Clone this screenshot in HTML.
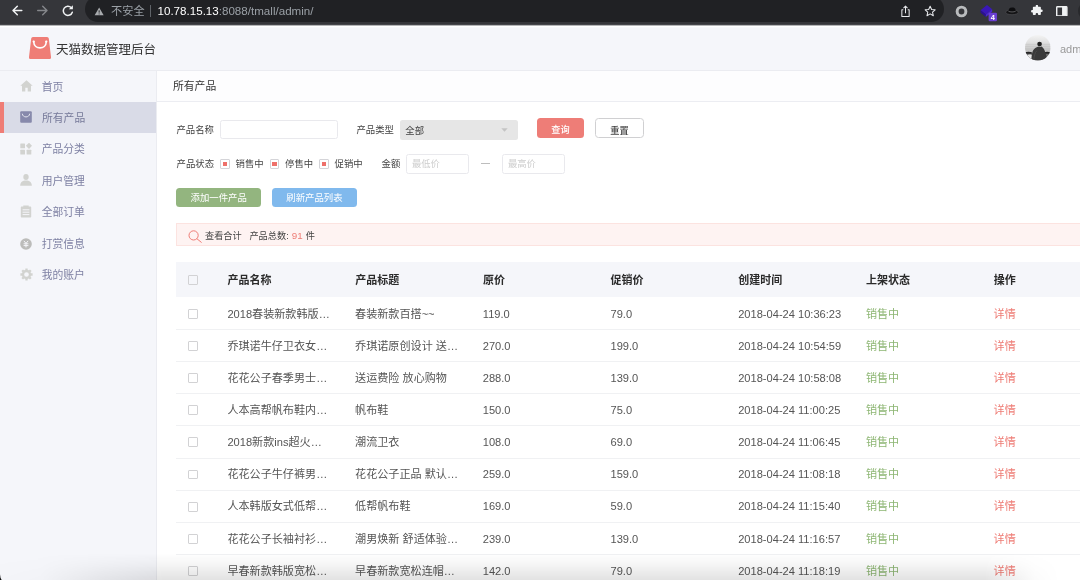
<!DOCTYPE html>
<html lang="zh-CN">
<head>
<meta charset="utf-8">
<title>天猫数据管理后台</title>
<style>
*{box-sizing:border-box;margin:0;padding:0}
html,body{width:1080px;height:580px;overflow:hidden;background:#fff}
body{font-family:"Liberation Sans","Noto Sans CJK SC",sans-serif;color:#333;position:relative;-webkit-font-smoothing:antialiased}
#wrap{position:absolute;left:0;top:0;width:1080px;height:580px;overflow:hidden;will-change:transform}
.abs{position:absolute}
/* browser chrome */
#chrome{position:absolute;left:0;top:0;width:1080px;height:25px;background:#35363a;border-bottom:1px solid #45464a}
#cline{position:absolute;left:0;top:25px;width:1080px;height:3px;background:linear-gradient(to bottom,#b4b5b7 0,#b4b5b7 1px,#fff 1px,#fff 2px,#f8f9fc 2px,#f8f9fc 3px);z-index:3}
#pill{position:absolute;left:85px;top:-4px;width:859px;height:26px;border-radius:13px;background:#202124}
#chrome svg{position:absolute}
.url{position:absolute;top:4px;font-size:11.6px;line-height:14px;white-space:nowrap;letter-spacing:0}
/* header */
#header{position:absolute;left:0;top:25px;width:1080px;height:45.5px;background:#f5f6fa;border-bottom:1px solid #ebecf1}
#title{position:absolute;left:56px;top:16px;font-size:12.5px;line-height:18px;color:#333;white-space:nowrap}
/* sidebar */
#side{position:absolute;left:0;top:70.5px;width:157px;height:510px;background:#f5f6fa;border-right:1px solid #ebecf1}
.mi{position:absolute;left:0;width:156px;height:31.400px}
.mi span{position:absolute;left:41.700px;top:8px;font-size:10.800px;line-height:16px;color:#7e81a3;white-space:nowrap}
.mi svg{position:absolute;left:19.500px;top:9px}
.mi.on{background:#d9dbe7;border-left:4px solid #ef7d76}
.mi.on span{left:38px;color:#767999}
.mi.on svg{left:15.800px}
/* main */
#crumb{position:absolute;left:157px;top:70.5px;width:923px;height:31px;background:#fdfdfe;border-bottom:1px solid #ecedf2}
#crumb span{position:absolute;left:16px;top:7.5px;font-size:10.8px;line-height:16px;color:#333}
.lbl{position:absolute;font-size:9.4px;line-height:12px;color:#444;white-space:nowrap}
.inp{position:absolute;border:1px solid #e9e9ed;border-radius:2.5px;background:#fff;height:19.5px}
.ph{position:absolute;left:5px;top:3px;font-size:9.3px;line-height:12px;color:#cdcdcd;white-space:nowrap}
.cb{position:absolute;width:9.600px;height:9.600px;border:1px solid #d4d4d8;border-radius:1px;background:#fff}
.cb i{position:absolute;left:1.500px;top:1.500px;width:4.800px;height:4.800px;background:#ee706a}
.btn{position:absolute;height:19.6px;border-radius:3.5px;color:#fff;font-size:9.4px;line-height:19.6px;text-align:center;white-space:nowrap}
/* table */
#thead{position:absolute;left:176.400px;top:262px;width:910px;height:35px;background:#f5f6fa}
.th{position:absolute;top:273px;font-size:11px;line-height:14px;font-weight:bold;color:#2b2b2b;white-space:nowrap}
.row{position:absolute;left:176.400px;width:910px;height:32.150px;border-bottom:1px solid #f0f1f3}
.row span{position:absolute;top:8.800px;font-size:11.100px;line-height:14px;color:#555;white-space:nowrap}
.row .ck{position:absolute;left:11.600px;top:11.100px;width:10px;height:9.800px;border:1px solid #d2d2d4;border-radius:1px;background:#fff}
.c1{left:51px}.c2{left:178.7px}.c3{left:306.4px}.c4{left:434.1px}.c5{left:561.8px}
.row span.c6{left:689.5px;color:#8db673}
.row span.c7{left:817.2px;color:#ee7c75}
#fade{position:absolute;left:0;top:553px;width:1080px;height:27px;background:linear-gradient(to bottom,rgba(0,0,0,0),rgba(0,0,0,0.035) 40%,rgba(0,0,0,0.115));-webkit-mask-image:linear-gradient(to right,rgba(0,0,0,.05) 0,rgba(0,0,0,.1) 40px,rgba(0,0,0,.6) 100px,#000 165px,#000 985px,rgba(0,0,0,.15) 1035px,rgba(0,0,0,0) 1060px);mask-image:linear-gradient(to right,rgba(0,0,0,.05) 0,rgba(0,0,0,.1) 40px,rgba(0,0,0,.6) 100px,#000 165px,#000 985px,rgba(0,0,0,.15) 1035px,rgba(0,0,0,0) 1060px)}
#corner{position:absolute;left:0;top:574px;width:3px;height:6px}
</style>
</head>
<body>
<div id="wrap">

<!-- ============ browser chrome ============ -->
<div id="chrome">
  <div id="pill"></div>
  <!-- back -->
  <svg style="left:11px;top:4.300px" width="13" height="13" viewBox="0 0 13 13"><path d="M10.800 6.500H2.400M6.300 2.200L2 6.500l4.300 4.300" fill="none" stroke="#f1f3f4" stroke-width="1.5" stroke-linecap="round" stroke-linejoin="round"/></svg>
  <!-- forward -->
  <svg style="left:36px;top:4.300px" width="13" height="13" viewBox="0 0 13 13"><path d="M1.700 6.500h8.800M6.700 2.200l4.300 4.300-4.300 4.300" fill="none" stroke="#85878b" stroke-width="1.4" stroke-linecap="round" stroke-linejoin="round"/></svg>
  <!-- reload -->
  <svg style="left:61px;top:4px" width="14" height="14" viewBox="0 0 14 14"><path d="M11.3 8.2A4.6 4.6 0 1 1 10.2 3.6" fill="none" stroke="#f1f3f4" stroke-width="1.5" stroke-linecap="round"/><path d="M11.9 1.2v4.1H7.8z" fill="#f1f3f4"/></svg>
  <!-- warning -->
  <svg style="left:93.900px;top:7px" width="10.300" height="8.800" viewBox="0 0 11 10"><path d="M5.5 0.6L10.6 9.4H0.4z" fill="#a8abae"/><path d="M5.5 3.8v2.6M5.5 7.4v1" stroke="#202124" stroke-width="1.1"/></svg>
  <span class="url" style="left:111px;color:#9aa0a6;font-size:11.2px">不安全</span>
  <div class="abs" style="left:150px;top:5px;width:1px;height:12px;background:#5f6368"></div>
  <span class="url" style="left:157.5px;color:#fff">10.78.15.13<span style="color:#9aa0a6">:8088/tmall/admin/</span></span>
  <!-- share -->
  <svg style="left:899.600px;top:4.700px" width="11" height="12.800" viewBox="0 0 12 14"><path d="M3.6 5.2H2v7.3h8V5.2H8.4M6 9V1.4M3.8 3.4L6 1.2l2.2 2.2" fill="none" stroke="#e8eaed" stroke-width="1.1" stroke-linejoin="round"/></svg>
  <!-- star -->
  <svg style="left:924.300px;top:4.800px" width="12.300" height="12.300" viewBox="0 0 14 14"><path d="M7 1.4l1.7 3.7 4 .4-3 2.7.9 4L7 10.1 3.4 12.2l.9-4-3-2.7 4-.4z" fill="none" stroke="#e8eaed" stroke-width="1.15" stroke-linejoin="round"/></svg>
  <!-- grey ring -->
  <svg style="left:955px;top:4.500px" width="13" height="13" viewBox="0 0 14 14"><circle cx="7" cy="7" r="4.7" fill="none" stroke="#b9bbbd" stroke-width="3.2"/></svg>
  <!-- purple cube + badge -->
  <svg style="left:979px;top:3px" width="20" height="20" viewBox="0 0 20 20"><path d="M1.5 7.2L8 2l5.2 4.3L6.8 11.6z" fill="#3a17b8"/><path d="M1.5 7.2v2.4l5.3 4.3v-2.3z" fill="#2a0f93"/><path d="M6.8 11.6v2.3l6.4-5.2V6.3z" fill="#4a26cf"/><rect x="9.6" y="9.8" width="8.4" height="8.4" rx="1.2" fill="#6a3fd1"/><text x="13.8" y="16.8" font-family="Liberation Sans,sans-serif" font-size="7.5" font-weight="bold" fill="#fff" text-anchor="middle">4</text></svg>
  <!-- hat -->
  <svg style="left:1005px;top:6px" width="14" height="10" viewBox="0 0 14 10"><ellipse cx="7" cy="6.200" rx="6.300" ry="2.500" fill="#141416" stroke="#5c5d61" stroke-width=".5"/><path d="M3.4 5.6C3.3 3 4.2 1.4 7.2 1.4s3.7 1.6 3.5 4.2c-1.6 1-5.6 1-7.3 0z" fill="#0d0d0f"/><path d="M3.4 5.2c1.8 1 5.5 1 7.3 0" stroke="#7a7a7d" stroke-width=".7" fill="none"/></svg>
  <!-- puzzle -->
  <svg style="left:1031.300px;top:4.900px" width="11.800" height="11.800" viewBox="0 0 14 14"><path d="M5.6 1.1a1.4 1.4 0 0 1 2.8 0V2h2.4c.5 0 .9.4.9.9v2.4h.7a1.5 1.5 0 0 1 0 3h-.7v2.7c0 .5-.4.9-.9.9H8.500v-.8a1.500 1.500 0 0 0-3 0v.8H3.100a.9.9 0 0 1-.9-.9V8.900h-.7a1.500 1.500 0 0 1 0-3h.7V2.900c0-.5.400-.9.900-.9h2.500z" fill="#f1f3f4"/></svg>
  <!-- side panel -->
  <svg style="left:1056.200px;top:5.700px" width="11.600" height="10.700" viewBox="0 0 13 12"><rect x=".8" y=".8" width="11.400" height="10.400" rx=".8" fill="none" stroke="#f1f3f4" stroke-width="1.600"/><rect x="6.800" y="1" width="5.200" height="10" fill="#f1f3f4"/></svg>
  <div class="abs" style="left:1078px;top:2px;width:18px;height:18px;border-radius:9px;background:#28292c"></div>
</div>

<div id="cline"></div>
<!-- ============ header ============ -->
<div id="header">
  <svg class="abs" style="left:29px;top:11.800px" width="22" height="22.300" viewBox="0 0 22 22.700" preserveAspectRatio="none"><path d="M4 0H18a1.800 1.800 0 0 1 1.800 1.600L22 20.300a2.200 2.200 0 0 1-2.200 2.400H2.200a2.200 2.200 0 0 1-2.200-2.400L2.200 1.600A1.800 1.800 0 0 1 4 0z" fill="#ef7d76"/><path d="M4.700 4.700c.3 8.500 12.300 8.500 12.600 0" fill="none" stroke="#fff" stroke-width="1.600" stroke-linecap="round"/><circle cx="4.700" cy="4.600" r="1.150" fill="#fff"/><circle cx="17.300" cy="4.600" r="1.150" fill="#fff"/></svg>
  <div id="title">天猫数据管理后台</div>
  <!-- avatar -->
  <svg class="abs" style="left:1025.200px;top:10.100px" width="25.600" height="25.600" viewBox="0 0 26 26"><defs><clipPath id="av"><circle cx="13" cy="13" r="13"/></clipPath><linearGradient id="sky" x1="0" y1="0" x2="0" y2="1"><stop offset="0" stop-color="#f4f4f4"/><stop offset=".35" stop-color="#dcdcdc"/><stop offset=".6" stop-color="#c4c4c4"/><stop offset="1" stop-color="#b0b0b0"/></linearGradient></defs><g clip-path="url(#av)"><rect width="26" height="26" fill="url(#sky)"/><path d="M0 9.500h26M0 11.500h26M0 14h26" stroke="#bdbdbd" stroke-width=".5"/><path d="M0 17.500c2-.8 5-.8 7 0v2H0zM19 17.500c2-.8 5-.8 7 0v2h-7z" fill="#262626"/><path d="M0 19h26v7H0z" fill="#6b6b6b"/><path d="M2 20.500c1.500-1 4.500-1 6 .5v3H2z" fill="#e8e8e8"/><circle cx="14.800" cy="9.200" r="2.350" fill="#1f1f1f"/><path d="M6.500 26c0-3 .3-6 1-8.500.6-2.400 2.600-4.600 5-5.200l1.500-.6c1 .3 2 .3 2.800 0 2.300 1.300 3.200 4 4.200 7l2 7.300z" fill="#3a3a3a"/><path d="M9 26c0-4 1-8 3-10" stroke="#555" stroke-width=".6" fill="none"/></g></svg>
  <span class="abs" style="left:1060px;top:16.500px;font-size:11px;line-height:14px;color:#9a9a9a">admin</span>
</div>

<!-- ============ sidebar ============ -->
<div id="side">
  <div class="mi" style="top:0">
    <svg width="13" height="12" viewBox="0 0 13 12"><path d="M6.500 0.300L0.300 5.800h1.700v5.700h3.300V7.800h2.400v3.700H11V5.800h1.700z" fill="#d2d3d0"/></svg>
    <span>首页</span>
  </div>
  <div class="mi on" style="top:31.400px">
    <svg width="12" height="12" viewBox="0 0 12 12" style="top:9.500px"><rect x=".2" y=".2" width="11.600" height="11.600" rx="1" fill="#8789ab"/><path d="M2.300 2.700c.3 4.300 7.100 4.300 7.400 0" fill="none" stroke="#e4e5ef" stroke-width="1"/></svg>
    <span>所有产品</span>
  </div>
  <div class="mi" style="top:62.800px">
    <svg width="12" height="12" viewBox="0 0 12 12" style="top:9.500px"><rect x=".3" y=".6" width="4.700" height="4.700" rx=".5" fill="#d2d3d0"/><rect x=".3" y="6.800" width="4.700" height="4.700" rx=".5" fill="#d2d3d0"/><rect x="6.600" y="6.800" width="4.700" height="4.700" rx=".5" fill="#d2d3d0"/><path d="M9 -.3L12 2.800 9 5.900 5.900 2.800z" fill="#d2d3d0"/></svg>
    <span>产品分类</span>
  </div>
  <div class="mi" style="top:94.200px">
    <svg width="12" height="12" viewBox="0 0 12 12" style="top:9.500px"><ellipse cx="6" cy="3.100" rx="2.700" ry="3" fill="#d2d3d0"/><path d="M.2 11.800c0-3.600 2.200-5.300 5.800-5.300s5.800 1.700 5.800 5.300z" fill="#d2d3d0"/></svg>
    <span>用户管理</span>
  </div>
  <div class="mi" style="top:125.600px">
    <svg width="12" height="13" viewBox="0 0 12 13" style="left:20px;top:9px"><path d="M1.500 1.600h1.800V.6h5.400v1h1.800c.4 0 .7.300.7.700v9.500c0 .4-.3.700-.7.700h-9c-.4 0-.7-.3-.7-.7V2.300c0-.4.300-.7.700-.7z" fill="#d2d3d0"/><path d="M2.600 4.800h6.800M2.600 7.200h6.800M2.600 9.600h6.800" stroke="#f5f6fa" stroke-width="1"/></svg>
    <span>全部订单</span>
  </div>
  <div class="mi" style="top:157px">
    <svg width="12" height="12" viewBox="0 0 12 12" style="left:20px;top:10px"><circle cx="6" cy="6" r="5.800" fill="#bcbcba"/><path d="M3.900 2.900L6 5.400l2.100-2.500M3.600 5.800h4.800M3.600 7.600h4.800M6 5.400v4" fill="none" stroke="#f5f6fa" stroke-width="1"/></svg>
    <span>打赏信息</span>
  </div>
  <div class="mi" style="top:188.400px">
    <svg width="13" height="13" viewBox="0 0 13 13" style="left:19.600px;top:8.800px"><g fill="none" stroke="#d2d3d0"><circle cx="6.500" cy="6.500" r="3.500" stroke-width="2.300"/><path d="M6.500 .4v2M6.500 10.600v2M.4 6.500h2M10.600 6.500h2M2.200 2.200l1.400 1.400M9.400 9.400l1.400 1.400M2.200 10.800l1.400-1.400M9.400 3.600l1.400-1.400" stroke-width="2.300"/></g></svg>
    <span>我的账户</span>
  </div>
</div>

<!-- ============ main ============ -->
<div id="crumb"><span>所有产品</span></div>

<!-- filter row 1 -->
<span class="lbl" style="left:176.400px;top:123.500px">产品名称</span>
<div class="inp" style="left:220px;top:119.500px;width:118px"></div>
<span class="lbl" style="left:356.400px;top:123.500px">产品类型</span>
<div class="abs" style="left:400.300px;top:120px;width:117.700px;height:19.500px;border-radius:2.500px;background:#e6e6e6">
  <span class="abs" style="left:5px;top:4.500px;font-size:9.400px;line-height:12px;color:#444">全部</span>
  <svg class="abs" style="left:100.500px;top:7.800px" width="7" height="4" viewBox="0 0 7 4"><path d="M.3 .2h6.400L3.500 3.800z" fill="#c4c4c4"/></svg>
</div>
<div class="btn" style="left:537px;top:118.300px;width:47px;height:19.800px;background:#ee7d77;font-weight:500;font-size:9.200px;line-height:25.600px;overflow:hidden">查询</div>
<div class="btn" style="left:595.300px;top:118.300px;width:48.500px;height:19.800px;background:#fff;border:1px solid #d0d0d2;color:#444;font-weight:500;font-size:9.200px;line-height:24.200px;overflow:hidden">重置</div>

<!-- filter row 2 -->
<span class="lbl" style="left:176.500px;top:157.500px">产品状态</span>
<div class="cb" style="left:220px;top:159px"><i></i></div>
<span class="lbl" style="left:235.500px;top:157.500px">销售中</span>
<div class="cb" style="left:269.700px;top:159px"><i></i></div>
<span class="lbl" style="left:285px;top:157.500px">停售中</span>
<div class="cb" style="left:319.200px;top:159px"><i></i></div>
<span class="lbl" style="left:334.600px;top:157.500px">促销中</span>
<span class="lbl" style="left:381.600px;top:157.500px">金额</span>
<div class="inp" style="left:406px;top:154px;width:63px"><span class="ph">最低价</span></div>
<div class="abs" style="left:481px;top:163.200px;width:9px;height:1px;background:#bdbdbd"></div>
<div class="inp" style="left:502px;top:154px;width:63px"><span class="ph">最高价</span></div>

<!-- buttons -->
<div class="btn" style="left:176.300px;top:187.500px;width:84.700px;background:#93b57f">添加一件产品</div>
<div class="btn" style="left:272px;top:187.500px;width:85px;background:#80b9ed">刷新产品列表</div>

<!-- summary bar -->
<div class="abs" style="left:176.400px;top:223px;width:910px;height:23px;background:#fef3f2;border:1px solid #fce3e0"></div>
<svg class="abs" style="left:187.500px;top:229.500px" width="15" height="13" viewBox="0 0 15 13"><circle cx="5.600" cy="5.400" r="4.600" fill="none" stroke="#ef7d76" stroke-width="1"/><path d="M9 8.800l4.300 3.500" stroke="#ef7d76" stroke-width="1" stroke-linecap="round"/></svg>
<span class="lbl" style="left:205px;top:229.500px;font-size:9.200px">查看合计</span>
<span class="lbl" style="left:249.400px;top:229.500px;font-size:9.200px">产品总数: <span style="color:#ee7c75;font-size:9.800px;margin:0 .5px 0 .6px">91</span> 件</span>

<!-- table header -->
<div id="thead"></div>
<div class="abs" style="left:188px;top:275px;width:10px;height:10px;border:1px solid #d2d2d4;border-radius:1px;background:#f5f6fa"></div>
<span class="th" style="left:227.500px">产品名称</span>
<span class="th" style="left:355.200px">产品标题</span>
<span class="th" style="left:482.900px">原价</span>
<span class="th" style="left:610.600px">促销价</span>
<span class="th" style="left:738.300px">创建时间</span>
<span class="th" style="left:866px">上架状态</span>
<span class="th" style="left:993.700px">操作</span>

<!-- table rows -->
<div class="row" style="top:297.80px"><div class="ck"></div><span class="c1">2018春装新款韩版…</span><span class="c2">春装新款百搭~~</span><span class="c3">119.0</span><span class="c4">79.0</span><span class="c5">2018-04-24 10:36:23</span><span class="c6">销售中</span><span class="c7">详情</span></div>
<div class="row" style="top:329.95px"><div class="ck"></div><span class="c1">乔琪诺牛仔卫衣女…</span><span class="c2">乔琪诺原创设计 送…</span><span class="c3">270.0</span><span class="c4">199.0</span><span class="c5">2018-04-24 10:54:59</span><span class="c6">销售中</span><span class="c7">详情</span></div>
<div class="row" style="top:362.10px"><div class="ck"></div><span class="c1">花花公子春季男士…</span><span class="c2">送运费险 放心购物</span><span class="c3">288.0</span><span class="c4">139.0</span><span class="c5">2018-04-24 10:58:08</span><span class="c6">销售中</span><span class="c7">详情</span></div>
<div class="row" style="top:394.25px"><div class="ck"></div><span class="c1">人本高帮帆布鞋内…</span><span class="c2">帆布鞋</span><span class="c3">150.0</span><span class="c4">75.0</span><span class="c5">2018-04-24 11:00:25</span><span class="c6">销售中</span><span class="c7">详情</span></div>
<div class="row" style="top:426.40px"><div class="ck"></div><span class="c1">2018新款ins超火…</span><span class="c2">潮流卫衣</span><span class="c3">108.0</span><span class="c4">69.0</span><span class="c5">2018-04-24 11:06:45</span><span class="c6">销售中</span><span class="c7">详情</span></div>
<div class="row" style="top:458.55px"><div class="ck"></div><span class="c1">花花公子牛仔裤男…</span><span class="c2">花花公子正品 默认…</span><span class="c3">259.0</span><span class="c4">159.0</span><span class="c5">2018-04-24 11:08:18</span><span class="c6">销售中</span><span class="c7">详情</span></div>
<div class="row" style="top:490.70px"><div class="ck"></div><span class="c1">人本韩版女式低帮…</span><span class="c2">低帮帆布鞋</span><span class="c3">169.0</span><span class="c4">59.0</span><span class="c5">2018-04-24 11:15:40</span><span class="c6">销售中</span><span class="c7">详情</span></div>
<div class="row" style="top:522.85px"><div class="ck"></div><span class="c1">花花公子长袖衬衫…</span><span class="c2">潮男焕新 舒适体验…</span><span class="c3">239.0</span><span class="c4">139.0</span><span class="c5">2018-04-24 11:16:57</span><span class="c6">销售中</span><span class="c7">详情</span></div>
<div class="row" style="top:555.00px"><div class="ck"></div><span class="c1">早春新款韩版宽松…</span><span class="c2">早春新款宽松连帽…</span><span class="c3">142.0</span><span class="c4">79.0</span><span class="c5">2018-04-24 11:18:19</span><span class="c6">销售中</span><span class="c7">详情</span></div>

<div id="fade"></div>
<svg id="corner" viewBox="0 0 3 6"><path d="M0 .3Q.2 4.300 1.700 6H0z" fill="#141414"/></svg>
</div>
</body>
</html>
